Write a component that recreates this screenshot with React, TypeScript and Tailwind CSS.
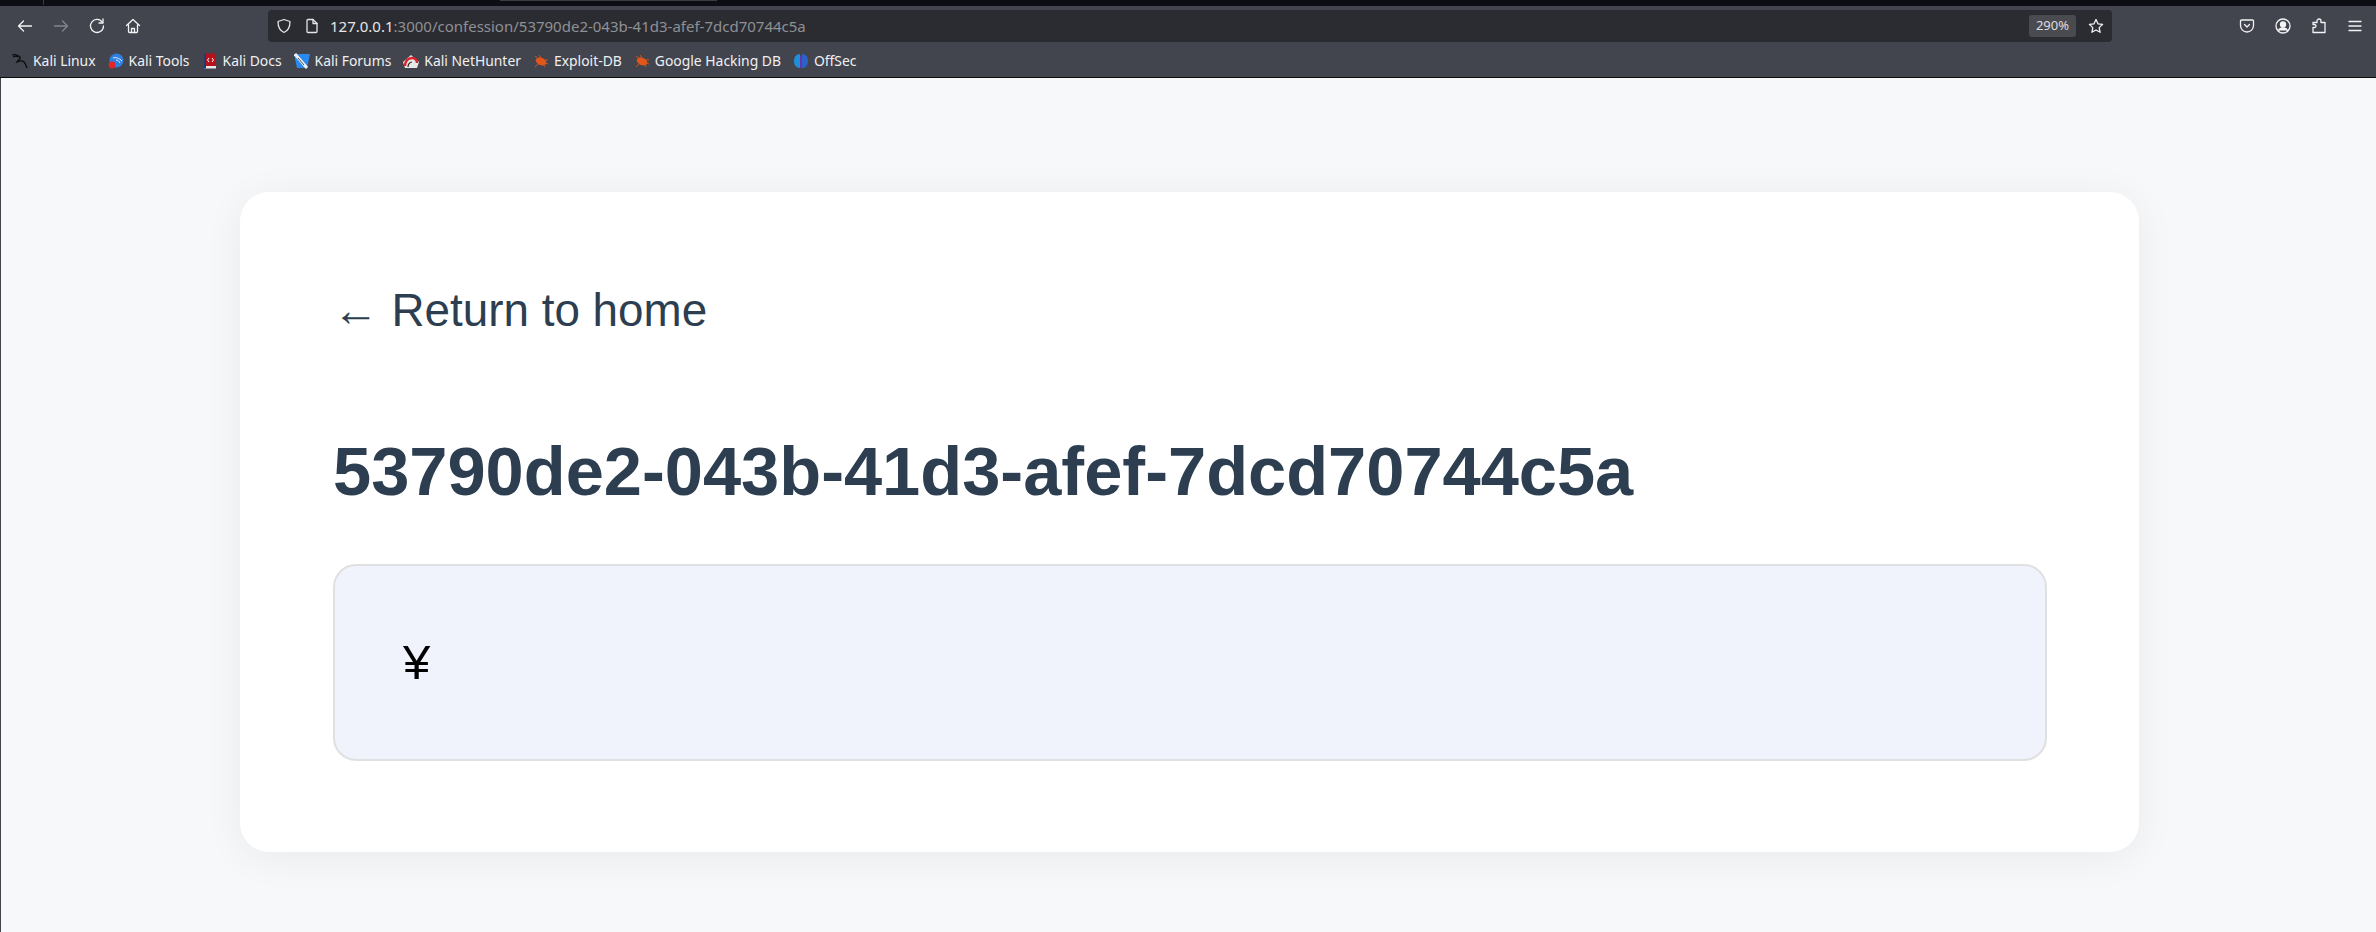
const bookmarks = [
  { label: "Kali Linux", icon: "dragon" },
  { label: "Kali Tools", icon: "tools" },
  { label: "Kali Docs", icon: "docs" },
  { label: "Kali Forums", icon: "forums" },
  { label: "Kali NetHunter", icon: "nethunter" },
  { label: "Exploit-DB", icon: "bug" },
  { label: "Google Hacking DB", icon: "bug" },
  { label: "OffSec", icon: "offsec" },
]

function Favicon({ name }: { name: string }) {
  if (name === "dragon") {
    return (
      <svg width="16" height="16" viewBox="0 0 16 16" fill="none" stroke="#0b0b0b" strokeWidth="1.3">
        <path d="M0 2c3-1 6 0 8 2 1 2-2 3-3 5 2-1 5-2 7 0 2 2 2 4 3 6" />
        <path d="M1 4c2-1 4-1 5 0" />
      </svg>
    )
  }
  if (name === "tools") {
    return (
      <svg width="16" height="16" viewBox="0 0 16 16" fill="none">
        <circle cx="8.5" cy="7.5" r="7" fill="#2f7fe0" />
        <path d="M5 5c3-1 6 0 9 3M8 7c2 0 3 1 4 3" stroke="#e6f1ff" strokeWidth="1" />
        <circle cx="4" cy="12" r="3.4" fill="#e0262b" />
      </svg>
    )
  }
  if (name === "docs") {
    return (
      <svg width="16" height="16" viewBox="0 0 16 16" fill="none">
        <rect x="2" y="0.5" width="12" height="14" rx="1" fill="#b5121b" />
        <rect x="2" y="13" width="12" height="2.5" fill="#e8e8e8" />
        <rect x="2" y="0.5" width="2" height="15" fill="#1c3b6e" />
        <path d="M7 5 5.5 7 7 9M10 5l1.5 2L10 9" stroke="#fff" strokeWidth="1" />
      </svg>
    )
  }
  if (name === "forums") {
    return (
      <svg width="16" height="16" viewBox="0 0 16 16" fill="none">
        <path d="M0 1h16l-3 14H3z" fill="#2a8af0" />
        <path d="M1 1 13 15" stroke="#f2f2f2" strokeWidth="3" />
        <path d="M4 5l6 7" stroke="#222" strokeWidth="0.8" />
      </svg>
    )
  }
  if (name === "nethunter") {
    return (
      <svg width="16" height="16" viewBox="0 0 16 16" fill="none">
        <path d="M0 9 8 2l8 7-2 6H2z" fill="#e8e8e8" />
        <path d="M2 13c0-5 3-8 7-8 3 0 5 2 5 5" stroke="#d9232e" strokeWidth="2.4" />
        <path d="M5 14c0-3 2-5 4-5" stroke="#222" strokeWidth="1.2" />
      </svg>
    )
  }
  if (name === "bug") {
    return (
      <svg width="16" height="16" viewBox="0 0 16 16" fill="none">
        <ellipse cx="8" cy="8.5" rx="5.5" ry="3.6" fill="#e2561a" transform="rotate(20 8 8.5)" />
        <path d="M2 3l4 3M6 2l2 3M2 14l3-3M12 14l-2-3M15 7h-3M15 11l-3-1" stroke="#e2561a" strokeWidth="0.9" />
      </svg>
    )
  }
  return (
    <svg width="16" height="16" viewBox="0 0 16 16" fill="none">
      <path d="M7 1C3 1 1 4 1 8s2 7 6 7z" fill="#1f8fd8" />
      <path d="M9 1c4 0 6 3 6 7s-2 7-6 7z" fill="#2a62c9" />
      <path d="M8 3v12" stroke="#7a2bd0" strokeWidth="1.4" />
    </svg>
  )
}

function Icon({ children, className = "" }: { children: React.ReactNode; className?: string }) {
  return (
    <svg width={16} height={16} viewBox="0 0 16 16" fill="none" stroke="currentColor" strokeWidth="1.3" strokeLinecap="round" strokeLinejoin="round" className={className}>
      {children}
    </svg>
  )
}

function Toolbar() {
  return (
    <div className="h-[36px] pt-[4px] flex items-center bg-[#42454e] text-[#f3f3f4]">
      <div className="w-[268px] flex items-center shrink-0 pl-[17px] gap-[20px]">
        <Icon>
          <path d="M14.5 8h-13M6.5 3 1.5 8l5 5" />
        </Icon>
        <Icon className="text-[#83858b]">
          <path d="M1.5 8h13M9.5 3l5 5-5 5" />
        </Icon>
        <Icon>
          <path d="M13.5 4.5A6.5 6.5 0 1 0 14.5 8" />
          <path d="M14 1v4h-4" />
        </Icon>
        <Icon>
          <path d="M1.5 7.5 8 1.5l6.5 6M3.5 6.5v7a1 1 0 0 0 1 1h7a1 1 0 0 0 1-1v-7" />
          <path d="M6.5 14.500v-4h3v4" />
        </Icon>
      </div>
      <div className="w-[1844px] h-[32px] shrink-0 rounded-[4px] bg-[#2b2c32] flex items-center pl-[8px] pr-[8px]">
        <Icon className="text-[#e4e4e6]">
          <path d="M8 1.5 2 3.5c0 5 1 9 6 11 5-2 6-6 6-11z" />
        </Icon>
        <Icon className="text-[#e4e4e6] ml-[12px]">
          <path d="M3 2.5a1 1 0 0 1 1-1h5l4 4v8a1 1 0 0 1-1 1H4a1 1 0 0 1-1-1z" />
          <path d="M9 1.5v4h4" />
        </Icon>
        <span className="ml-[10px] text-[15px] text-[#e6e6e8] font-['Noto_Sans',sans-serif] whitespace-nowrap">
          127.0.0.1<span className="text-[#8f9095]">:3000/confession/53790de2-043b-41d3-afef-7dcd70744c5a</span>
        </span>
        <span className="ml-auto w-[47px] h-[22px] rounded-[3px] bg-[#4a4b51] text-[13px] text-[#dcdce0] flex items-center justify-center font-['Noto_Sans',sans-serif]">
          290%
        </span>
        <Icon className="ml-[12px]">
          <path d="m8 1.500 2 4.300 4.600.6-3.400 3.200.9 4.700L8 12l-4.100 2.300.9-4.700L1.400 6.400 6 5.800z" />
        </Icon>
      </div>
      <div className="flex-1 flex items-center justify-end pr-[13px] gap-[20px]">
        <Icon>
          <path d="M1.500 3a1 1 0 0 1 1-1h11a1 1 0 0 1 1 1v4.500a6.500 6.500 0 0 1-13 0z" />
          <path d="m5.500 6.500 2.500 2.500 2.500-2.500" />
        </Icon>
        <Icon>
          <circle cx="8" cy="8" r="7" />
          <circle cx="8" cy="6.500" r="2.500" fill="currentColor" />
          <path d="M3.500 12.500c1-2 2.500-2.500 4.500-2.500s3.500.5 4.500 2.500" fill="currentColor" />
        </Icon>
        <Icon>
          <path d="M2 14.500V9.500h1.500a1.500 1.500 0 0 0 0-3H2V4.500h4V3a2 2 0 0 1 4 0v1.500h4v10z" />
        </Icon>
        <Icon>
          <path d="M2 3.500h12M2 8h12M2 12.500h12" />
        </Icon>
      </div>
    </div>
  )
}

function BookmarksBar() {
  return (
    <div className="h-[36px] pt-[4px] flex items-center bg-[#42454e] pl-[12px] gap-[12px] border-b border-[#0c0c0d] font-['Noto_Sans',sans-serif] text-[13.9px] text-[#f0f0f2]">
      {bookmarks.map((b) => (
        <div key={b.label} className="flex items-center gap-[5px] whitespace-nowrap">
          <Favicon name={b.icon} />
          <span>{b.label}</span>
        </div>
      ))}
    </div>
  )
}

export default function App() {
  return (
    <div className="h-[932px] flex flex-col overflow-hidden bg-[#f7f8fa]">
      {/* tab strip, only its lower edge shows */}
      <div className="h-[6px] bg-[#0d0e13] shrink-0 flex items-start pl-[43px]">
        <div className="w-px h-[5px] bg-[#3a3b40]" />
        <div className="ml-[456px] w-[217px] h-px bg-[#3c3d42]" />
      </div>
      <Toolbar />
      <BookmarksBar />
      <main className="flex-1 border-l border-[#42454e] pl-[2px] pt-[114px] font-['Liberation_Sans',sans-serif]">
        <div className="w-[1899px] h-[660px] mx-auto rounded-[29px] bg-white pl-[93px] pr-[92px] pt-[92px] shadow-[0_6px_40px_rgba(0,0,0,0.06)]">
          <a className="block text-[45.8px] leading-[53px] text-[#2c3e50]">← Return to home</a>
          <h1 className="mt-[95px] text-[68.6px] leading-[80px] font-bold text-[#2c3e50] whitespace-nowrap">
            53790de2-043b-41d3-afef-7dcd70744c5a
          </h1>
          <div className="mt-[52px] h-[197px] rounded-[23px] border-2 border-[#e0e0e2] bg-[#f0f3fb] px-[68px] flex items-center text-[49px] text-black">
            ¥
          </div>
        </div>
      </main>
    </div>
  )
}
